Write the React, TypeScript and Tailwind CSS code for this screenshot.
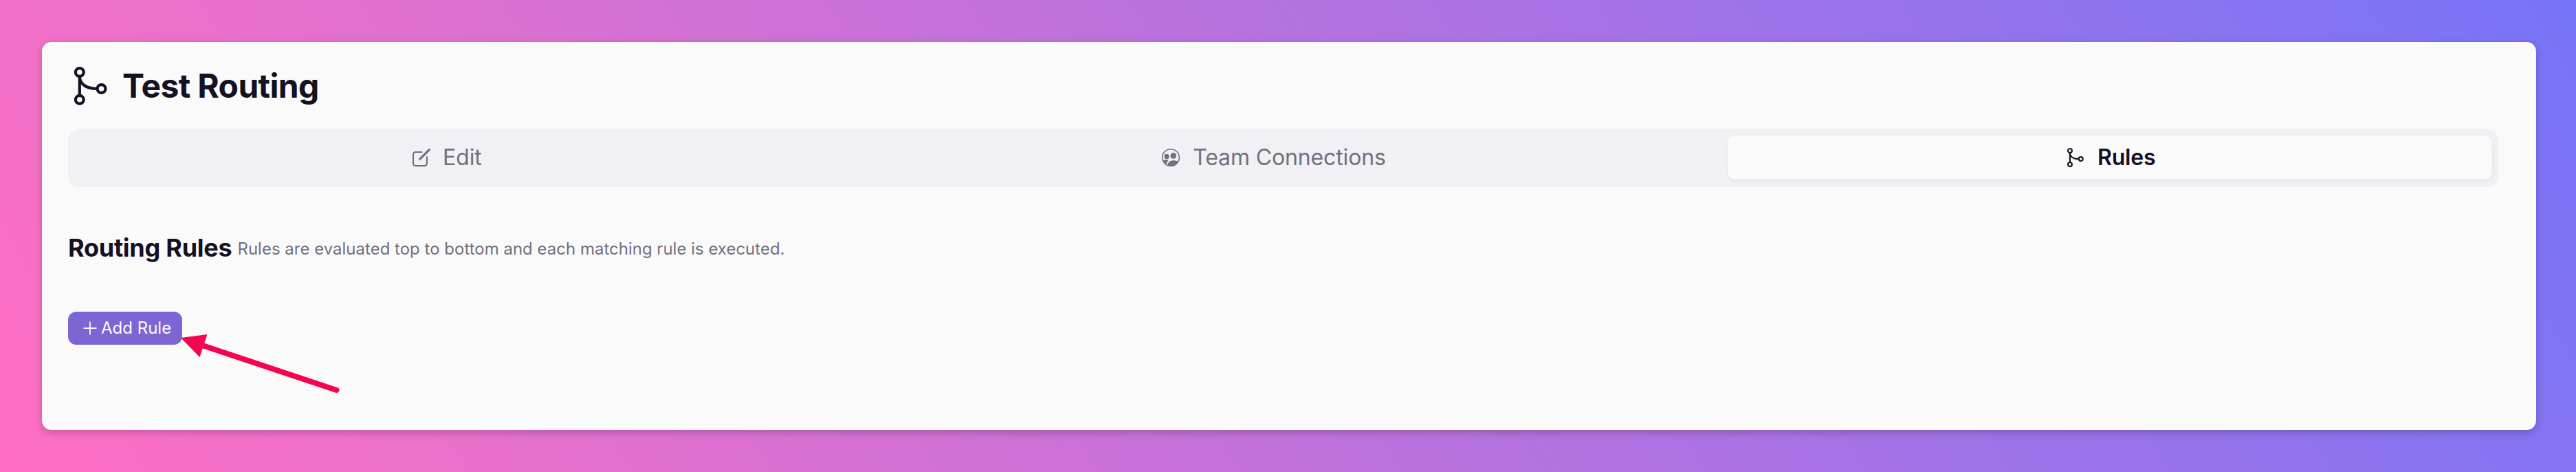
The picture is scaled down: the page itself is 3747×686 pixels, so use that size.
import type { ReactNode } from 'react';

interface IconProps {
  className?: string;
}

interface Tab {
  label: string;
  icon: ReactNode;
  active?: boolean;
}

function RoutingIcon({ className }: IconProps) {
  return (
    <svg viewBox="0 0 64 64" fill="none" stroke="currentColor" strokeWidth="4.2" className={className}>
      <circle cx="15.8" cy="12" r="5.9" />
      <circle cx="15.8" cy="51.8" r="5.9" />
      <circle cx="47.5" cy="36" r="5.9" />
      <path d="M15.8 18v28M15.8 18c0 10 8 18 25.7 18" />
    </svg>
  );
}

function EditIcon({ className }: IconProps) {
  return (
    <svg viewBox="0 0 32 32" fill="none" stroke="currentColor" strokeLinecap="round" className={className}>
      <path strokeWidth="2" d="M17.5 8H8.5A3.5 3.5 0 0 0 5 11.5v13A3.5 3.5 0 0 0 8.5 28h13a3.5 3.5 0 0 0 3.5-3.5V15" />
      <path strokeWidth="3.2" d="M14.8 18.2L28.6 4.4" />
    </svg>
  );
}

function TeamIcon({ className }: IconProps) {
  return (
    <svg viewBox="0 0 32 32" fill="currentColor" className={className}>
      <circle cx="16" cy="16" r="12.3" fill="none" stroke="currentColor" strokeWidth="1.6" />
      <circle cx="10" cy="14.4" r="3.6" />
      <circle cx="19.8" cy="13.4" r="4.3" />
      <path d="M5 20.5c2-1.500 5-1.900 7.800-1.100-1.700 1.400-2.600 3.400-2.600 6.200C7.800 24.500 6 22.800 5 20.500z" />
      <path d="M11.600 26.800c.4-4.100 3.500-6.600 8-6.600 3 0 5.600.6 7.600 1.800-2 4-6 6.500-11.200 6.500-1.600 0-3.100-.5-4.400-1.700z" />
    </svg>
  );
}

const tabs: Tab[] = [
  { label: 'Edit', icon: <EditIcon className="size-8" /> },
  { label: 'Team Connections', icon: <TeamIcon className="size-8" /> },
  { label: 'Rules', icon: <RoutingIcon className="size-8" />, active: true },
];

export default function App() {
  return (
    <div className="h-[686px] w-[3747px] bg-[linear-gradient(60deg,#ff6fc3,#7774f7)] pt-[61px] pl-[61px] font-[Inter,sans-serif] text-[#151022]">
      <main className="relative h-[564px] w-[3628px] rounded-[14px] bg-[#fafafa] pt-8 pr-[55px] pl-[38px] shadow-[0_4px_12px_rgba(0,0,0,0.2)]">
        <header className="flex h-16 items-center gap-[14px]">
          <RoutingIcon className="ml-px size-16" />
          <h1 className="text-5xl font-bold tracking-[-0.014em]">Test Routing</h1>
        </header>

        {/* Tabs */}
        <div className="mt-[31px] grid h-[84px] grid-cols-[1083fr_1324fr_1112fr] rounded-2xl bg-[#f0f0f5] pt-[9px] pr-[9px] pb-[11px] pl-2">
          {tabs.map((tab) => (
            <button
              key={tab.label}
              className={
                tab.active
                  ? 'flex items-center justify-center gap-4 rounded-xl bg-[#fafafa] text-[32px] font-semibold tracking-[-0.006em] shadow-[0_2px_6px_rgba(0,0,0,0.06)]'
                  : 'flex items-center justify-center gap-4 text-[32px] tracking-[-0.004em] text-[#72707e]'
              }
            >
              {tab.icon}
              {tab.label}
            </button>
          ))}
        </div>

        <div className="mt-16 flex h-12 items-center gap-2">
          <h2 className="text-4xl leading-[48px] font-bold tracking-[-0.007em]">Routing Rules</h2>
          <p className="pt-[3px] text-2xl text-[#72707e]">Rules are evaluated top to bottom and each matching rule is executed.</p>
        </div>

        <button className="mt-[69px] flex h-12 w-[166px] items-center gap-1 rounded-xl bg-[#7d66d3] pl-5 text-2xl text-[#fafafa]">
          <svg viewBox="0 0 24 24" fill="none" stroke="currentColor" strokeWidth="1.8" className="size-6">
            <path d="M12 2.5v19M2.5 12h19" />
          </svg>
          Add Rule
        </button>

        {/* Pointer to the add button */}
        <svg viewBox="0 0 240 90" className="absolute top-[419px] left-[199px] h-[90px] w-[240px] overflow-visible" fill="#f50550">
          <path d="M3 11l38.5-5-11 33z" />
          <path d="M36 22.5L229.500 87" stroke="#f50550" strokeWidth="8" strokeLinecap="round" />
        </svg>
      </main>
    </div>
  );
}
